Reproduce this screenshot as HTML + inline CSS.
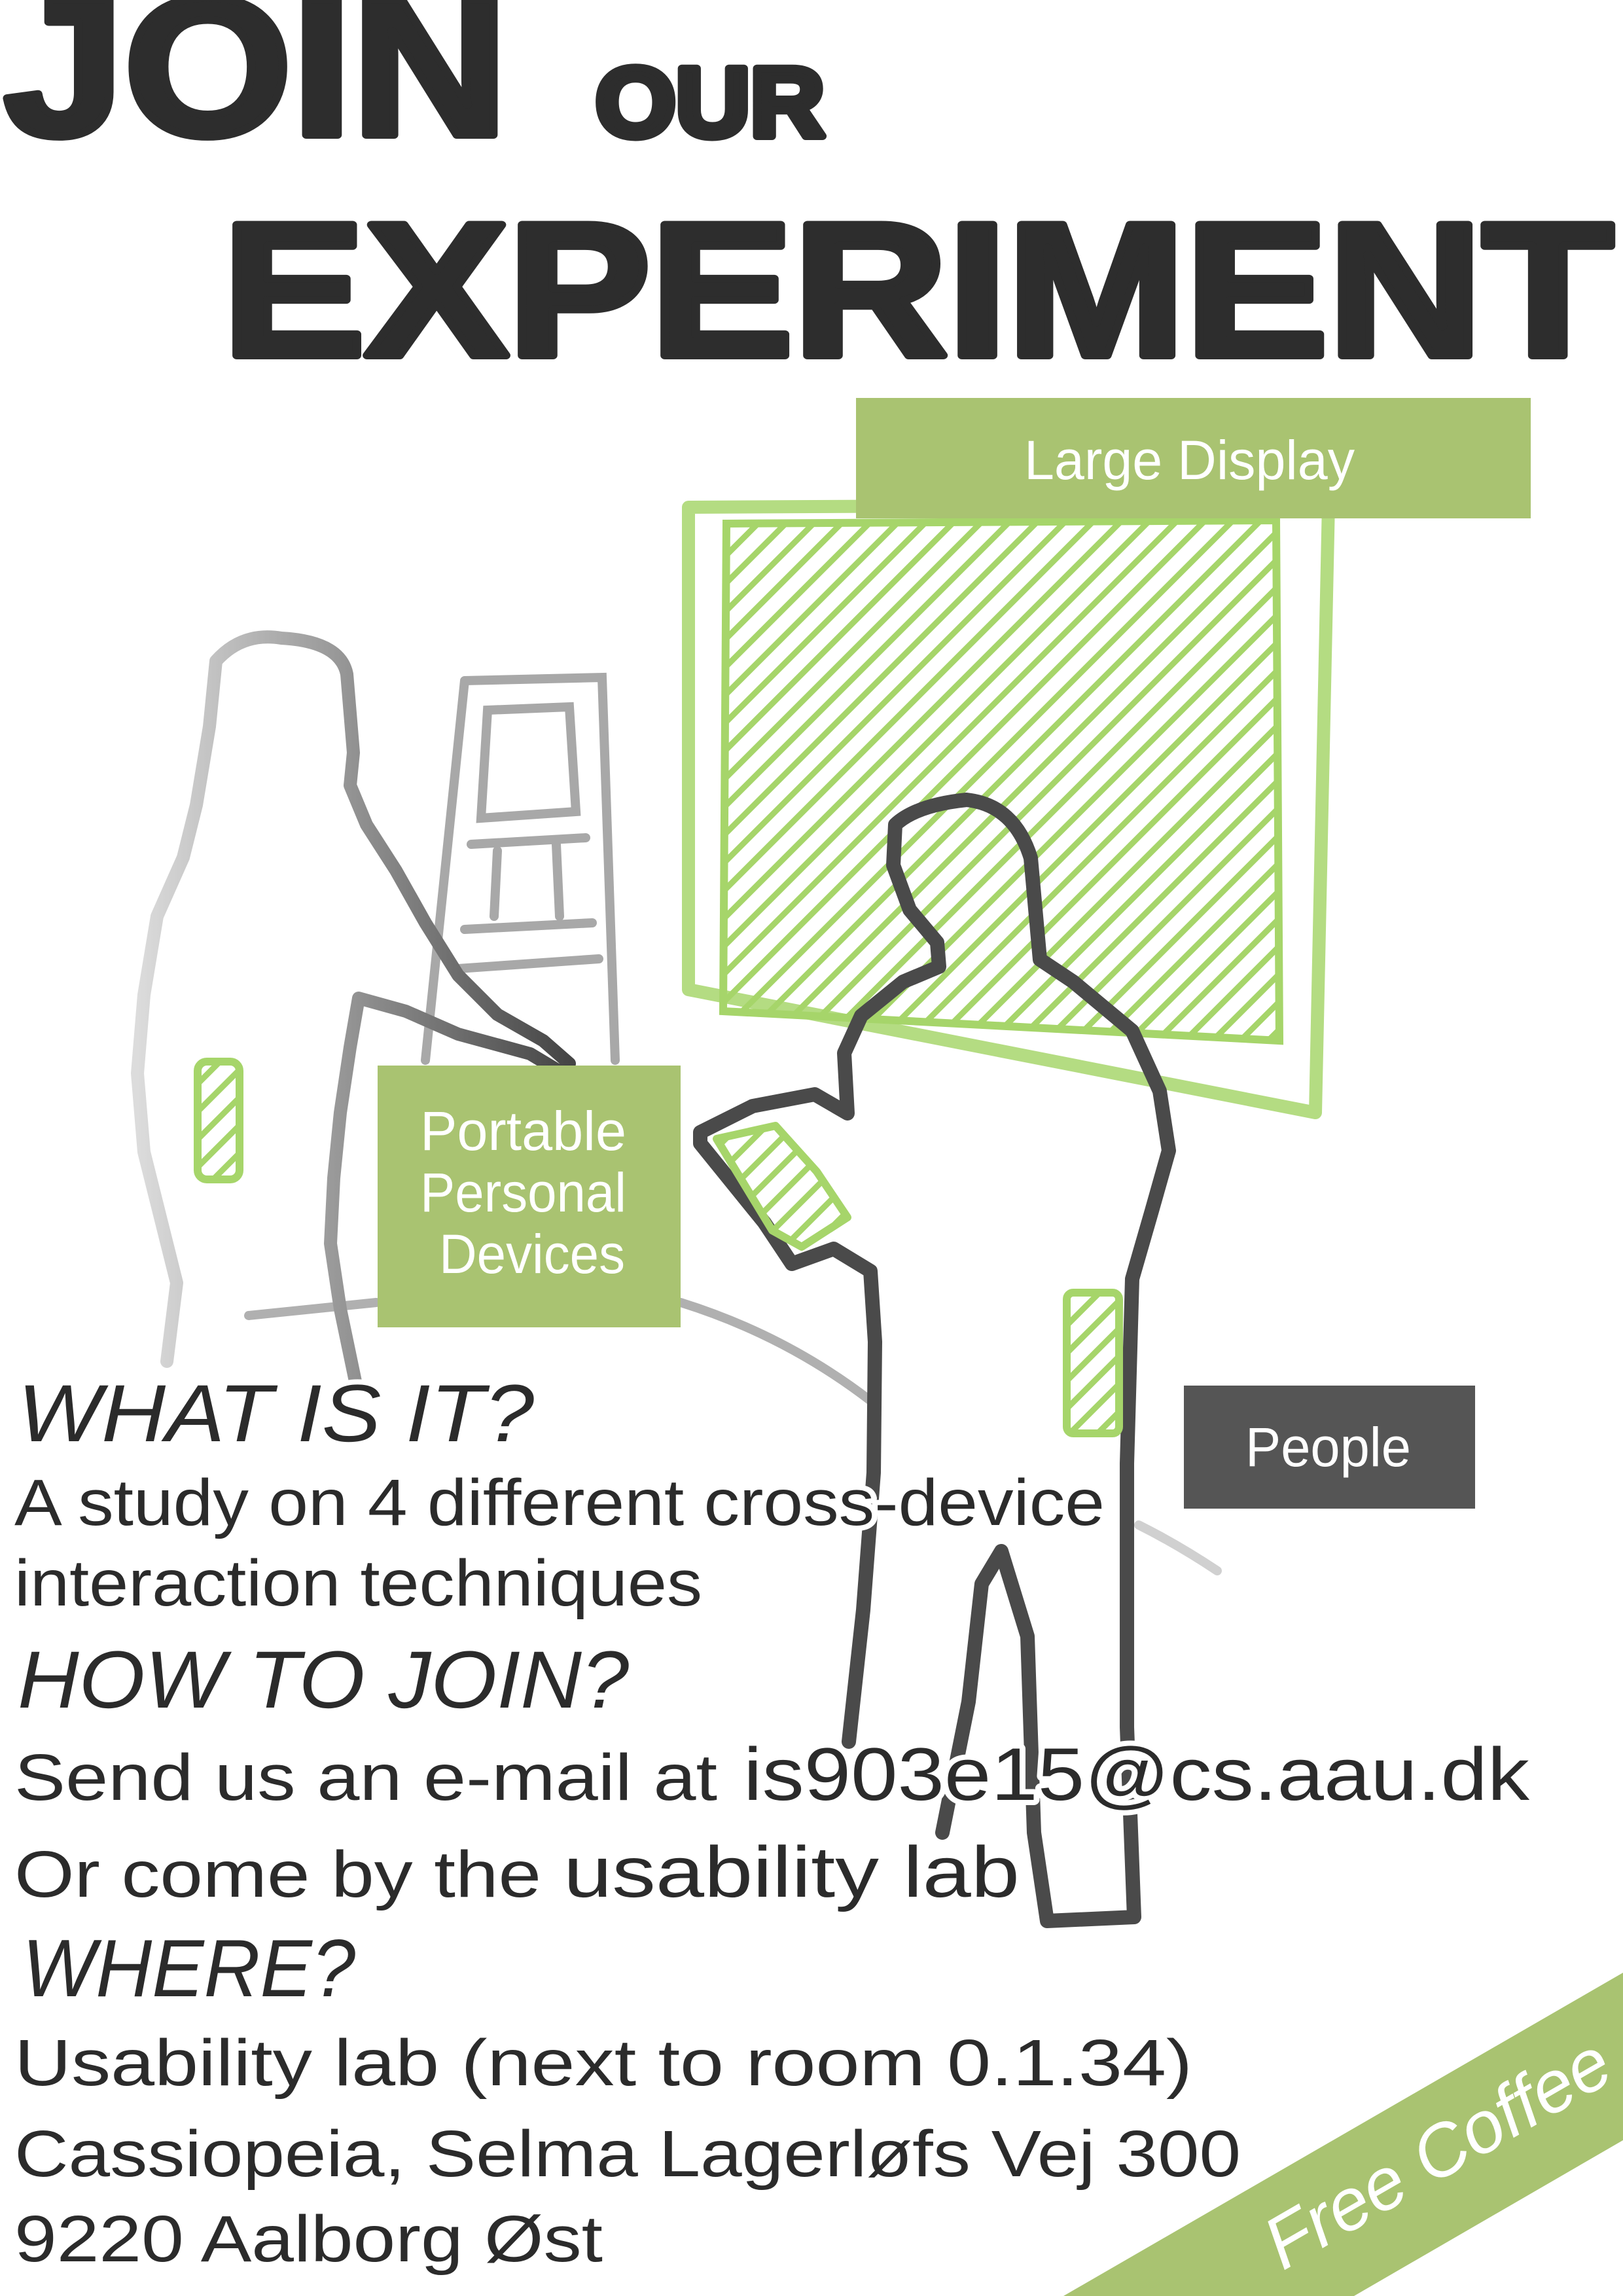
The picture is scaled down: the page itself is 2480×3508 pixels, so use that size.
<!DOCTYPE html>
<html><head><meta charset="utf-8"><style>
html,body{margin:0;padding:0;background:#fff;}
svg{display:block;}
</style></head><body>
<svg width="2480" height="3508" viewBox="0 0 2480 3508" xmlns="http://www.w3.org/2000/svg">
<defs>
<pattern id="hatch" patternUnits="userSpaceOnUse" width="30" height="30" patternTransform="rotate(45)">
<rect x="0" y="0" width="9" height="30" fill="#a6d56a"/>
</pattern>
<linearGradient id="lg" x1="0" y1="0" x2="1" y2="0">
<stop offset="0" stop-color="#dcdcdc"/><stop offset="0.45" stop-color="#9a9a9a"/><stop offset="1" stop-color="#454545"/>
</linearGradient>
</defs>

<!-- headline -->
<g fill="#2d2d2d" stroke="#2d2d2d" stroke-width="12" stroke-linejoin="round" font-family="Liberation Sans, sans-serif" font-weight="bold">
<text x="6" y="206" font-size="300" textLength="770" lengthAdjust="spacingAndGlyphs">JOIN</text>
<text x="910" y="208" font-size="150" textLength="350" lengthAdjust="spacingAndGlyphs">OUR</text>
<text x="340" y="543" font-size="290" textLength="2125" lengthAdjust="spacingAndGlyphs">EXPERIMENT</text>
</g>

<!-- large display -->
<polygon points="1052,775 2030,770 2010,1700 1052,1512" fill="none" stroke="#b4dc82" stroke-width="20" stroke-linejoin="round"/>
<polygon points="1110,800 1950,795 1955,1590 1105,1545" fill="url(#hatch)" stroke="#a6d56a" stroke-width="12"/>

<!-- bookshelf -->
<g fill="none" stroke="#a8a8a8" stroke-width="14" stroke-linecap="round">
<path d="M710,1040 L920,1035 L940,1620 M710,1040 L650,1620"/>
<path d="M745,1085 L870,1080 L880,1240 L735,1250 Z"/>
<path d="M720,1290 L895,1280 M710,1420 L905,1410"/>
<path d="M760,1300 L755,1400 M850,1290 L855,1400"/>
<path d="M700,1480 L915,1465"/>
</g>

<!-- floor lines -->
<g fill="none" stroke="#b0b0b0" stroke-width="14" stroke-linecap="round">
<path d="M1040,1990 Q1200,2040 1330,2140"/>
<path d="M380,2010 L575,1990"/>
<path d="M1740,2330 Q1800,2360 1860,2400" stroke="#d0d0d0"/>
</g>

<!-- left person -->
<path d="M255,2080 L270,1960 L245,1860 L220,1760 L210,1640 L220,1520 L240,1400 L280,1310 L300,1230 L320,1110 L330,1010 Q370,965 430,975 Q520,980 530,1030 L540,1150 L535,1200 L560,1260 L605,1330 L650,1410 L700,1490 L760,1550 L830,1590 L870,1625 L860,1640 L810,1610 L700,1580 L620,1545 L548,1525 L535,1600 L520,1700 L510,1800 L505,1900 L520,2000 L545,2120" fill="none" stroke="url(#lg)" stroke-width="20" stroke-linejoin="round" stroke-linecap="round"/>
<rect x="302" y="1622" width="64" height="180" rx="14" fill="url(#hatch)" stroke="#a6d56a" stroke-width="12"/>

<!-- right person -->
<path d="M1297,2661 L1319,2460 L1335,2250 L1337,2050 L1330,1942 L1274,1908 L1210,1931 L1168,1868 L1070,1747 L1070,1730 L1150,1690 L1245,1672 L1295,1701 L1290,1609 L1316,1552 L1380,1500 L1435,1477 L1432,1440 L1390,1390 L1365,1322 L1368,1260 Q1400,1230 1477,1222 Q1550,1230 1575,1311 L1589,1466 L1640,1500 L1730,1575 L1772,1667 L1786,1758 L1760,1850 L1730,1954 L1722,2236 L1722,2639 L1733,2929 L1600,2935 L1580,2800 L1570,2500 L1530,2370 L1500,2420 L1480,2600 L1440,2800" fill="none" stroke="#4a4a4a" stroke-width="22" stroke-linejoin="round" stroke-linecap="round"/>
<polygon points="1095,1740 1185,1720 1248,1790 1295,1860 1225,1905 1180,1880" fill="url(#hatch)" stroke="#a6d56a" stroke-width="12" stroke-linejoin="round"/>
<rect x="1630" y="1975" width="80" height="215" rx="10" fill="url(#hatch)" stroke="#a6d56a" stroke-width="12"/>

<!-- labels -->
<rect x="1308" y="608" width="1031" height="184" fill="#a9c371"/>
<text x="1565" y="732" font-family="Liberation Sans, sans-serif" font-size="84" fill="#fff" textLength="505" lengthAdjust="spacingAndGlyphs">Large Display</text>

<rect x="577" y="1628" width="463" height="400" fill="#a9c371"/>
<g font-family="Liberation Sans, sans-serif" font-size="84" fill="#fff">
<text x="642" y="1757" textLength="315" lengthAdjust="spacingAndGlyphs">Portable</text>
<text x="642" y="1851" textLength="315" lengthAdjust="spacingAndGlyphs">Personal</text>
<text x="671" y="1945" textLength="284" lengthAdjust="spacingAndGlyphs">Devices</text>
</g>

<rect x="1809" y="2117" width="445" height="188" fill="#555555"/>
<text x="1903" y="2240" font-family="Liberation Sans, sans-serif" font-size="84" fill="#fff" textLength="253" lengthAdjust="spacingAndGlyphs">People</text>

<!-- body text -->
<g font-family="Liberation Sans, sans-serif" fill="#2b2b2b" stroke="#fff" stroke-width="16" paint-order="stroke" stroke-linejoin="round">
<text x="27" y="2202" font-size="124" font-style="italic" textLength="789" lengthAdjust="spacingAndGlyphs">WHAT IS IT?</text>
<text x="22" y="2330" font-size="100" textLength="1666" lengthAdjust="spacingAndGlyphs">A study on 4 different cross-device</text>
<text x="22" y="2453" font-size="100" textLength="1051" lengthAdjust="spacingAndGlyphs">interaction techniques</text>
<text x="27" y="2609" font-size="124" font-style="italic" textLength="934" lengthAdjust="spacingAndGlyphs">HOW TO JOIN?</text>
<text x="22" y="2750" font-size="100" textLength="1074" lengthAdjust="spacingAndGlyphs">Send us an e-mail at</text>
<text x="1136" y="2750" font-size="114" textLength="1201" lengthAdjust="spacingAndGlyphs">is903e15@cs.aau.dk</text>
<text x="22" y="2898" font-size="100" textLength="805" lengthAdjust="spacingAndGlyphs">Or come by the</text>
<text x="861" y="2898" font-size="110" textLength="697" lengthAdjust="spacingAndGlyphs">usability lab</text>
<text x="34" y="3050" font-size="124" font-style="italic" textLength="509" lengthAdjust="spacingAndGlyphs">WHERE?</text>
<text x="22" y="3186" font-size="100" textLength="1800" lengthAdjust="spacingAndGlyphs">Usability lab (next to room 0.1.34)</text>
<text x="22" y="3325" font-size="100" textLength="1874" lengthAdjust="spacingAndGlyphs">Cassiopeia, Selma Lagerløfs Vej 300</text>
<text x="22" y="3455" font-size="100" textLength="899" lengthAdjust="spacingAndGlyphs">9220 Aalborg Øst</text>
</g>

<!-- free coffee band -->
<polygon points="1625,3508 2480,3014 2480,3270 2069,3508" fill="#a9c371"/>
<text x="0" y="0" transform="translate(1960,3470) rotate(-30)" font-family="Liberation Sans, sans-serif" font-style="italic" font-size="112" fill="#fff" textLength="590" lengthAdjust="spacingAndGlyphs">Free Coffee</text>
</svg>
</body></html>
